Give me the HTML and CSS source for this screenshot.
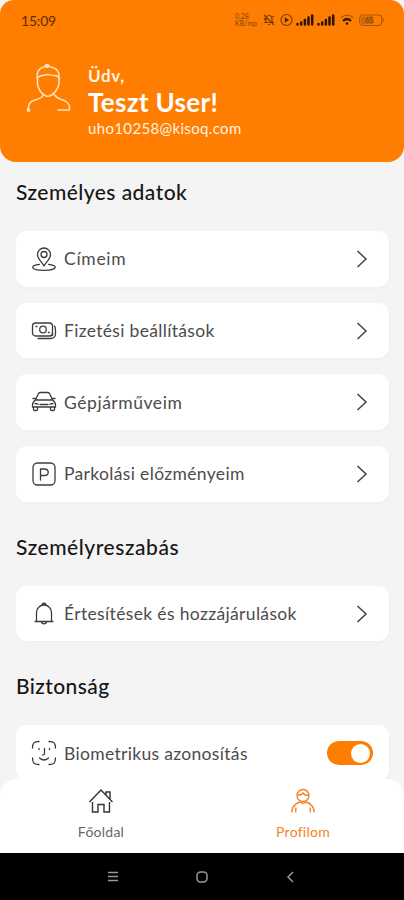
FILE: index.html
```html
<!DOCTYPE html>
<html lang="hu">
<head>
<meta charset="utf-8">
<meta name="viewport" content="width=device-width, initial-scale=1">
<title>Profilom</title>
<link rel="stylesheet" href="styles.css">
</head>
<body>
<div class="app">
  <header class="header">
    <div class="statusbar">
      <span class="clock">15:09</span>
      <div class="status-icons">
        <span class="speed">0,28<br>KB/mp</span>
        <svg width="12" height="14" viewBox="0 0 12 14" fill="none" stroke="#74400a" stroke-width="1.2"><path d="M2 9.5h8L9 8V5.5a3 3 0 0 0-6 0V8zM5 11.5h2M1 2l10 10M1 6.5 2.5 5M9.5 4 11 3"/></svg>
        <svg width="13" height="14" viewBox="0 0 13 14"><circle cx="6.5" cy="7" r="5.5" fill="none" stroke="#74400a" stroke-width="1.2"/><path d="M4.8 4.2v5.6L9 7z" fill="#4b2800"/></svg>
        <svg class="bars" width="39" height="14" viewBox="0 0 39 14" stroke="#2b1600" stroke-width="2.5" stroke-linecap="round"><path d="M1.5 11.500v-.5M5.200 11.500V9.500M8.900 11.500V7M12.500 11.500V4.500M16.200 11.500V2.500"/><path d="M22.500 11.500v-.5M26.200 11.500V9.500M29.900 11.500V7M33.500 11.500V4.500M37.200 11.500V2.500"/></svg>
        <svg class="wifi" width="14" height="14" viewBox="0 0 14 14" fill="none" stroke="#3b1e00"><path d="M1 4.700q6-5 12 0" stroke="#a85806" stroke-width="1.200"/><path d="M3 8q4-4 8 0" stroke-width="2.300"/><circle cx="7" cy="10.500" r="1.300" fill="#2b1600" stroke="none"/></svg>
        <svg width="25" height="13" viewBox="0 0 25 13"><rect x=".7" y="1" width="22" height="10.500" rx="3.500" fill="none" stroke="#a5580b" stroke-width="1.100"/><rect x="2" y="2.300" width="13" height="8" rx="2" fill="#c96c0c"/><path d="M24.200 4.500v3.500" stroke="#a5580b"/><text x="6" y="9.300" class="battery-text">65</text></svg>
      </div>
    </div>
    <div class="profile">
      <svg class="avatar" width="46" height="52" viewBox="0 0 46 52" fill="none" stroke="#ffe0bd" stroke-width="1.500" stroke-linecap="round" stroke-linejoin="round">
        <path d="M11.200 16c-1-5 1.500-10 7-11 1-2.500 5-2.500 6 0 6.500.500 9.500 5 9 11"/>
        <path d="M11 16.500c2-3.500 5-2.500 8-3.500 5-1.500 6 1 9 .500 2-.300 4 .500 5.500 3"/>
        <path d="M11.500 16.500v6c1.200 5 4 9.500 8 11.200 2.500 1 4 .700 6.300-.700 3.500-2.200 6-6.500 7.200-11v-5.500"/>
        <path d="M17 33.500c-2 4-7 3.500-11.500 6-2.700 1.700-3.300 4.500-3.300 8.500"/>
        <path d="M28.500 33c2.500 4 7.500 4 11.500 6.500 3 2 4 5 3.500 8.500H32"/>
        <circle cx="21" cy="4" r="1.500" fill="#ffe0bd"/><circle cx="2.500" cy="48" r="1.200" fill="#ffe0bd"/>
      </svg>
      <div class="identity">
        <div class="hello">Üdv,</div>
        <div class="name">Teszt User!</div>
        <div class="email">uho10258@kisoq.com</div>
      </div>
    </div>
  </header>

  <main class="content">
    <section>
      <h2 class="t-adatok">Személyes adatok</h2>
      <div class="list">
        <a class="card">
          <svg class="icon" viewBox="0 0 26 26"><path d="M13 20c-2-4-6.500-7-6.500-11.500a6.500 6.500 0 0 1 13 0C19.500 13 15 16 13 20z"/><circle cx="13" cy="8.500" r="3"/><path d="M8.500 18.300C4 18.800 1.700 20 1.700 21.300c0 1.700 4.500 3 11.300 3s11.300-1.300 11.300-3c0-1.300-2.300-2.500-6.800-3"/></svg>
          <span class="label t-cim">Címeim</span>
          <svg class="chevron" viewBox="0 0 12 18"><path d="m1.500 1 8.500 8-8.500 8"/></svg>
        </a>
        <a class="card">
          <svg class="icon" viewBox="0 0 26 26"><rect x="1.500" y="5" width="20" height="13" rx="3"/><circle cx="12" cy="11.500" r="3.300"/><path d="M23.500 8c1 1 1 2 1 4v3c0 4-1 5.500-5 5.500H7M21.500 15v2.500M5 8.500h1M17.500 14.500h1"/></svg>
          <span class="label t-fiz">Fizetési beállítások</span>
          <svg class="chevron" viewBox="0 0 12 18"><path d="m1.500 1 8.500 8-8.500 8"/></svg>
        </a>
        <a class="card">
          <svg class="icon" viewBox="0 0 26 26"><path d="m4.500 11 3-6.500q.500-1 2-1h7q1.500 0 2 1l3 6.500M2 9.500h3M21 9.500h3M4.500 11h17c2.500 1.500 3 3 3 5v2H1.500v-2c0-2 .500-3.500 3-5zM2.500 18.500v2q0 1 1.200 1h1.600q1.200 0 1.200-1v-2M19.500 18.500v2q0 1 1.200 1h1.600q1.200 0 1.200-1v-2M4 14.500l3 .700M22 14.500l-3 .700M9 15.500h8"/></svg>
          <span class="label t-gep">Gépjárműveim</span>
          <svg class="chevron" viewBox="0 0 12 18"><path d="m1.500 1 8.500 8-8.500 8"/></svg>
        </a>
        <a class="card">
          <svg class="icon" viewBox="0 0 26 26"><rect x="2" y="2" width="22" height="22" rx="4.500"/><path d="M9.500 19V8h4q3.700 0 3.700 3.200t-3.700 3.300h-4"/></svg>
          <span class="label t-park">Parkolási előzményeim</span>
          <svg class="chevron" viewBox="0 0 12 18"><path d="m1.500 1 8.500 8-8.500 8"/></svg>
        </a>
      </div>
    </section>
    <section>
      <h2 class="t-szab">Személyreszabás</h2>
      <div class="list">
        <a class="card">
          <svg class="icon" viewBox="0 0 26 26"><path d="M4 20.500h18M5.500 20.500v-9a7.500 7.500 0 0 1 15 0v9M11 3.500q2-2.500 4 0M10.500 21c.500 2.500 4.500 2.500 5 0"/></svg>
          <span class="label t-ert">Értesítések és hozzájárulások</span>
          <svg class="chevron" viewBox="0 0 12 18"><path d="m1.500 1 8.500 8-8.500 8"/></svg>
        </a>
      </div>
    </section>
    <section>
      <h2 class="t-bizt">Biztonság</h2>
      <div class="list">
        <div class="card card-switch">
          <svg class="icon" viewBox="0 0 26 26"><path d="M8 1.500C3 1.500 1.500 3 1.500 8M18 1.500c5 0 6.500 1.500 6.500 6.500M8 24.500c-5 0-6.500-1.500-6.500-6.500M18 24.500c5 0 6.500-1.500 6.500-6.500M8 8.500v1M18.500 8.500v1M13.500 8.500v5q0 1.500-1.700 1.500M8.500 18q4.500 4 9 0"/></svg>
          <span class="label t-bio">Biometrikus azonosítás</span>
          <span class="switch"><span class="knob"></span></span>
        </div>
      </div>
    </section>
  </main>

  <nav class="tabs">
    <a class="tab">
      <svg class="tab-icon" viewBox="0 0 26 26"><path d="M1.500 14 13 2l11.500 12M4.500 14v10h5.500v-7.500h6V24h5.500V14M18 6.500V4h4v7"/></svg>
      <span class="t-home">Főoldal</span>
    </a>
    <a class="tab active">
      <svg class="tab-icon" viewBox="0 0 26 26"><circle cx="13" cy="7.500" r="6"/><path d="M7.500 6.500q3 1.500 5.500-1.500 2 3 5.500 2M1.800 24.500c0-5.500 3-8.500 7.700-10.500q3.500 2.500 7 0c4.700 2 7.700 5 7.700 10.500M5.800 24.500v-5M20.200 24.500v-5"/></svg>
      <span class="t-prof">Profilom</span>
    </a>
  </nav>
  <div class="sysnav">
    <svg width="12" height="12" viewBox="0 0 12 12"><path d="M1 1.500h10M1 5.500h10M1 9.500h10"/></svg>
    <svg width="12" height="12" viewBox="0 0 12 12"><rect x="1" y="1" width="10" height="10" rx="3.500"/></svg>
    <svg width="12" height="12" viewBox="0 0 12 12"><path d="M8 1 3 6l5 5"/></svg>
  </div>
</div>
</body>
</html>
```
FILE: styles.css
```css
* { box-sizing: border-box; }
body { margin: 0; background: #f4f4f4; font-family: Lato, "Liberation Sans", sans-serif; color: #222; }
.app { width: 404px; height: 900px; display: flex; flex-direction: column; overflow: hidden; }
.header { height: 162px; flex: none; background: #ff7d00; border-radius: 14px 14px 16px 16px; }
.statusbar { height: 40px; padding: 0 20px 0 21px; display: flex; align-items: center; justify-content: space-between; }
.clock { font-size: 14px; letter-spacing: -.2px; color: #5a2f06; }
.status-icons { display: flex; align-items: center; gap: 5px; }
.speed { font-size: 7px; line-height: 7px; color: #7d440a; width: 23px; }
.bars { margin-left: -2px; }
.battery-text { font-size: 7px; fill: #723b04; }
.profile { display: flex; padding: 22px 0 0 26px; }
.identity { margin-left: 16px; padding-top: 4px; color: #fff3e4; white-space: nowrap; }
.hello { font-size: 17px; line-height: 20px; font-weight: 700; letter-spacing: .6px; }
.name { font-size: 26px; line-height: 33px; font-weight: 700; letter-spacing: .3px; color: #fff; }
.email { font-size: 15px; line-height: 19px; letter-spacing: .350px; }
.content { flex: 1; min-height: 0; overflow: hidden; padding: 18px 15px 0 16px; }
h2 { margin: -1px 0 26px; font-size: 21px; line-height: 26px; font-weight: 500; color: #171717; white-space: nowrap; }
.t-adatok { letter-spacing: .450px; }
.t-szab { letter-spacing: .550px; }
.t-bizt { letter-spacing: .400px; }
.t-cim { letter-spacing: .700px; }
.t-fiz { letter-spacing: .320px; }
.t-gep { letter-spacing: .550px; }
.t-park { letter-spacing: .340px; }
.t-ert { letter-spacing: .350px; }
.t-bio { letter-spacing: .320px; }
.t-home, .t-prof { letter-spacing: .250px; }
.list { display: grid; gap: 16px; margin-bottom: 33px; }
.card { height: 55.700px; background: #fff; border-radius: 11px; padding: 0 21px 0 15px; display: flex; align-items: center; box-shadow: 0 2px 5px rgba(0,0,0,.025); }
.icon { width: 26px; height: 26px; fill: none; stroke: #3c3c3c; stroke-width: 1.300; stroke-linecap: round; stroke-linejoin: round; }
.label { flex: 1; margin-left: 7px; font-size: 17.500px; color: #4c4c4c; white-space: nowrap; }
.chevron { width: 12px; height: 18px; fill: none; stroke: #444; stroke-width: 1.500; }
.card-switch { padding-right: 16px; }
.switch { width: 46px; height: 24px; border-radius: 12px; background: #ff7d00; display: flex; align-items: center; justify-content: flex-end; padding-right: 3px; }
.knob { width: 19px; height: 19px; border-radius: 50%; background: #fff; }
.tabs { height: 74px; flex: none; background: #fff; border-radius: 17px 17px 0 0; display: flex; }
.tab { flex: 1; display: flex; flex-direction: column; align-items: center; padding-top: 9px; font-size: 14px; line-height: 18px; color: #666; }
.tab-icon { width: 26px; height: 26px; margin-bottom: 9px; fill: none; stroke: #333; stroke-width: 1.400; }
.active { color: #f28328; }
.active .tab-icon { stroke: #f28328; }
.sysnav { height: 47px; flex: none; background: #000; display: flex; justify-content: center; align-items: center; gap: 77px; }
.sysnav svg { fill: none; stroke: #999; stroke-width: 1.500; }
```
